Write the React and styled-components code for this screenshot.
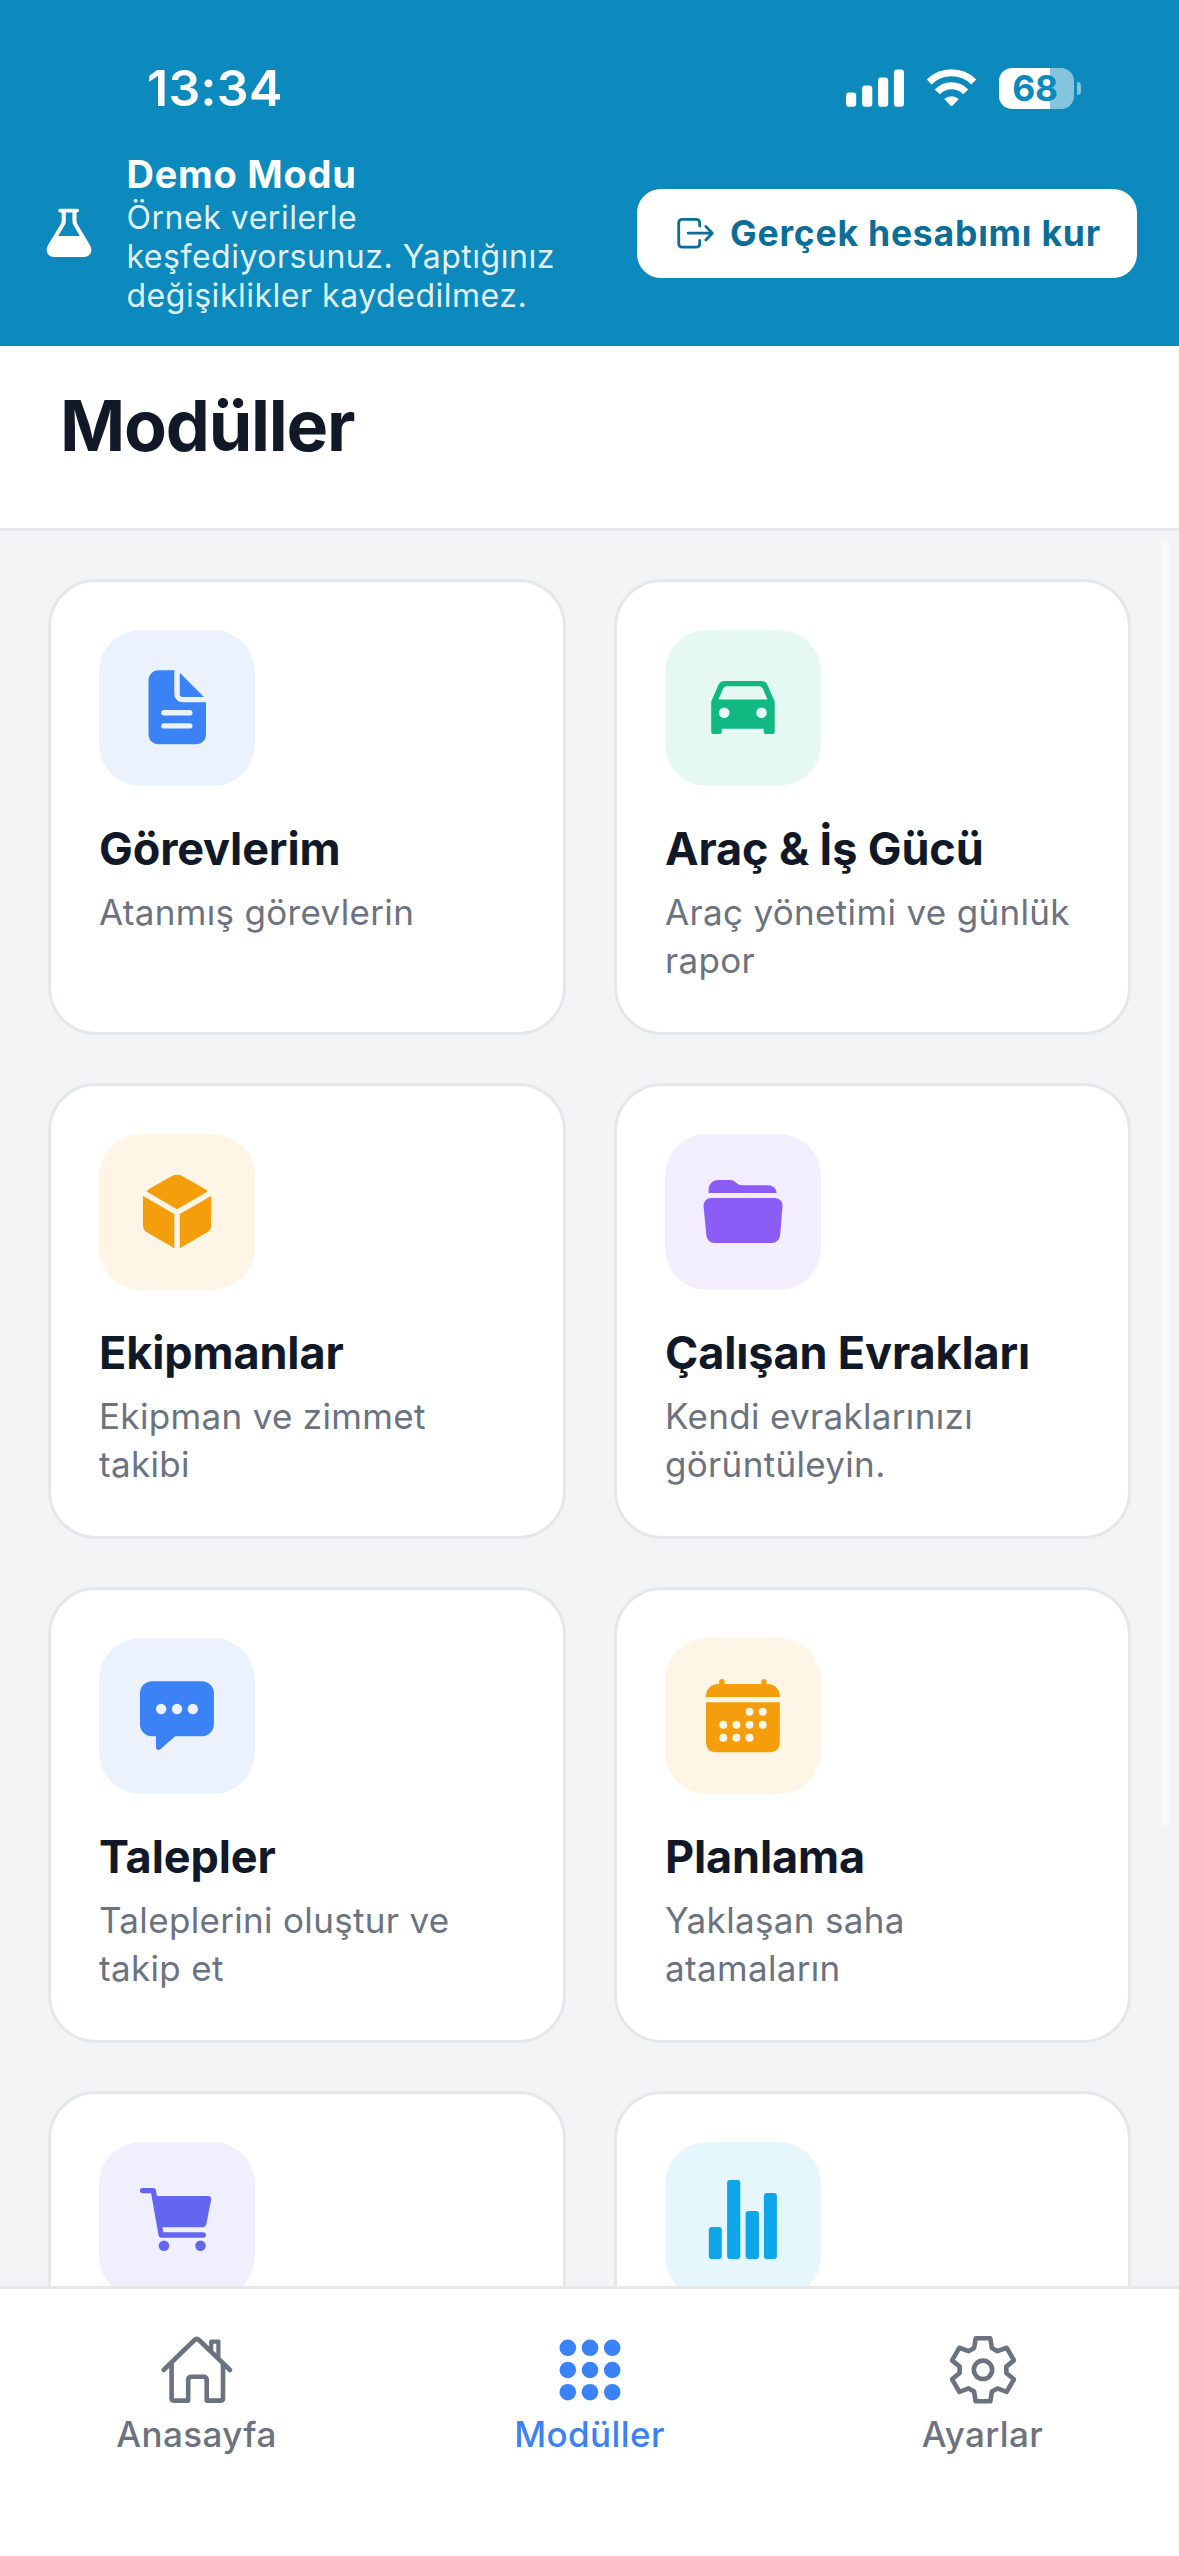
import React from "react";
import styled, { createGlobalStyle } from "styled-components";

const GlobalStyle = createGlobalStyle`
  *, *::before, *::after { box-sizing: border-box; }
  html, body { margin: 0; padding: 0; background: #ffffff; }
  body {
    font-family: Inter, "Liberation Sans", sans-serif;
    -webkit-font-smoothing: antialiased;
  }
`;

const Screen = styled.div`
  display: flex;
  flex-direction: column;
  width: 1179px;
  height: 2556px;
  overflow: hidden;
  background: #f3f4f6;
`;

const DemoHeader = styled.header`
  display: flex;
  flex-direction: column;
  height: 346px;
  flex: none;
  background: #0c8abd;
  color: #ffffff;
`;

const StatusBar = styled.div`
  display: flex;
  align-items: center;
  justify-content: space-between;
  height: 121px;
  padding: 55px 98px 0 147px;
`;

const Clock = styled.span`
  font-size: 50px;
  line-height: 60px;
  font-weight: 600;
  letter-spacing: 0.3px;
`;

const StatusIcons = styled.div`
  display: flex;
  align-items: center;
`;

const SignalSvg = styled.svg`
  display: block;
  width: 58px;
  height: 38px;
`;

const WifiSvg = styled.svg`
  display: block;
  width: 51px;
  height: 40px;
  margin-left: 22px;
`;

const Battery = styled.div`
  display: flex;
  align-items: center;
  margin-left: 22px;
`;

const BatteryBody = styled.div`
  display: flex;
  align-items: center;
  justify-content: center;
  width: 75px;
  height: 41px;
  border-radius: 13px;
  background: linear-gradient(to right, #ffffff 68%, #86c4de 68%);
  color: #0c8abd;
  font-size: 35.5px;
  line-height: 41px;
  font-weight: 700;
  letter-spacing: -0.4px;
  padding-right: 3px;
`;

const BatteryCap = styled.div`
  width: 4px;
  height: 13px;
  margin-left: 3px;
  border-radius: 0 4px 4px 0;
  background: #86c4de;
`;

const Banner = styled.div`
  display: flex;
  align-items: center;
  flex: 1;
  padding: 0 42px 0 39px;
`;

const FlaskSvg = styled.svg`
  display: block;
  width: 60px;
  height: 60px;
  flex: none;
  margin-bottom: 2px;
`;

const BannerText = styled.div`
  flex: 1;
  margin-left: 27.5px;
`;

const BannerTitle = styled.div`
  font-size: 38px;
  line-height: 44px;
  font-weight: 700;
  letter-spacing: 0.75px;
`;

const BannerBody = styled.div`
  margin-top: 2px;
  font-size: 32px;
  line-height: 39.3px;
  letter-spacing: 0.52px;
  white-space: pre-line;
  color: rgba(255, 255, 255, 0.9);
`;

const SetupButton = styled.button`
  display: flex;
  align-items: center;
  flex: none;
  width: 500px;
  height: 89px;
  padding: 0 0 0 38px;
  border: 0;
  border-radius: 24px;
  background: #ffffff;
  color: #0a6e99;
  font-family: inherit;
  font-size: 35.5px;
  line-height: 44px;
  font-weight: 700;
  white-space: nowrap;
  letter-spacing: 0.8px;
`;

const ExitSvg = styled.svg`
  display: block;
  width: 42px;
  height: 42px;
  margin-right: 13px;
  flex: none;
`;

const TitleBar = styled.div`
  flex: none;
  height: 185px;
  padding: 36px 60px 0;
  border-bottom: 3px solid #e5e7eb;
  background: #ffffff;
`;

const PageTitle = styled.h1`
  margin: 0;
  font-size: 70px;
  line-height: 88px;
  font-weight: 700;
  letter-spacing: -1.2px;
  color: #111827;
`;

const Content = styled.main`
  position: relative;
  flex: 1;
  min-height: 0;
  overflow: hidden;
  padding: 48px;
`;

const Scrollbar = styled.div`
  position: absolute;
  top: 9px;
  right: 9px;
  width: 9px;
  height: 1286px;
  border-radius: 5px;
  background: #f9f9fa;
`;

const ModuleGrid = styled.div`
  display: grid;
  grid-template-columns: 518px 517px;
  grid-auto-rows: 456px;
  gap: 48px;
`;

const Card = styled.article`
  padding: 48px;
  border: 3px solid #e5e7eb;
  border-radius: 48px;
  background: #ffffff;
`;

const IconTile = styled.div`
  display: flex;
  align-items: center;
  justify-content: center;
  width: 156px;
  height: 156px;
  border-radius: 42px;
  background: ${(p) => p.$bg};
  color: ${(p) => p.$fg};
`;

const ModuleSvg = styled.svg`
  display: block;
  width: 96px;
  height: 96px;
`;

const CardTitle = styled.h2`
  margin: 33px 0 0;
  font-size: 45px;
  line-height: 60px;
  font-weight: 700;
  letter-spacing: -0.12px;
  color: #111827;
  white-space: nowrap;
`;

const CardText = styled.p`
  margin: 9px 0 0;
  font-size: 35px;
  line-height: 48px;
  letter-spacing: 0.33px;
  color: #6b7280;
  white-space: pre-line;
`;

const TabBar = styled.nav`
  display: grid;
  grid-template-columns: repeat(3, 1fr);
  flex: none;
  height: 270px;
  border-top: 3px solid #e5e7eb;
  background: #ffffff;
`;

const Tab = styled.a`
  display: flex;
  flex-direction: column;
  align-items: center;
  padding-top: 39px;
  color: ${(p) => (p.$active ? "#3b82f6" : "#6b7280")};
`;

const TabSvg = styled.svg`
  display: block;
  width: 84px;
  height: 84px;
`;

const TabLabel = styled.span`
  font-size: 35px;
  line-height: 44px;
  font-weight: 500;
  letter-spacing: 0.4px;
`;

const glyphs = {
  document: (
    <>
      <path
        fillRule="evenodd"
        d="M29.5 10.3H45.3V33.5C45.3 38.5 49 42.3 54 42.3H77V74.3C77 80 72.7 84.3 67 84.3H29.5C23.9 84.3 19.5 80 19.5 74.3V20.3C19.5 14.7 23.9 10.3 29.5 10.3ZM34.9 50A2.7 2.7 0 0 0 34.9 55.4H60.8A2.7 2.7 0 0 0 60.8 50ZM34.9 63.2A2.7 2.7 0 0 0 34.9 68.6H60.8A2.7 2.7 0 0 0 60.8 63.2Z"
      />
      <path d="M50.8 12.7L74.9 37H53.5Q50.8 37 50.8 34.3Z" />
    </>
  ),
  car: (
    <path
      transform="translate(-0.8 0)"
      fillRule="evenodd"
      d="M17 41.5L24.2 25Q26 21 30.5 21H67Q71.5 21 73.3 25L80.5 41.5V72Q80.5 74 78.5 74H72.5Q69.5 74 69.5 71.5V68.7H27.6V71.5Q27.6 74 24.8 74H19Q17 74 17 72ZM24.2 39.4H73.3L68.6 28.6Q67.5 26.3 65 26.3H32.5Q30 26.3 29 28.6ZM30 47.4A5.3 5.3 0 1 0 30 58A5.3 5.3 0 1 0 30 47.4ZM67.3 47.4A5.3 5.3 0 1 0 67.3 58A5.3 5.3 0 1 0 67.3 47.4Z"
    />
  ),
  cube: (
    <>
      <path d="M17.7 27.4Q18.5 26 20.5 24.8L42.8 12.1Q48 9.3 53.2 12.1L75.6 24.8Q77.6 26 78.5 27.4L48 45.3Z" />
      <path d="M14 32L45.3 50V84.2L18.4 68.6Q14 66 14 61.5Z" />
      <path d="M82.1 32L50.8 50V84.2L77.7 68.6Q82.1 66 82.1 61.5Z" />
    </>
  ),
  folder: (
    <g transform="translate(-0.8 0)">
      <path d="M14.4 29V26.5C14.4 20.5 18 16 24 16H35.5C42 16 42 21.3 48.5 21.3H74C79 21.3 82.4 25 82.4 29Z" />
      <path d="M17 34H80.6C85.5 34 88.6 38 88.3 42.5L86 70.5C85.5 75.5 82 79 77.4 79H20.4C15.8 79 12.6 75.5 12.1 70.5L9.4 42.5C9 38 12.2 34 17 34Z" />
    </g>
  ),
  chat: (
    <path
      fillRule="evenodd"
      d="M23 13.2H72.9A12 12 0 0 1 84.9 25.2V56.2A12 12 0 0 1 72.9 68.2H46.2L31.4 81.2C29.5 82.8 27 82 27 79.3V68.2H23A12 12 0 0 1 11 56.2V25.2A12 12 0 0 1 23 13.2ZM32.2 35.8A5.2 5.2 0 1 0 32.2 46.2A5.2 5.2 0 1 0 32.2 35.8ZM48 35.8A5.2 5.2 0 1 0 48 46.2A5.2 5.2 0 1 0 48 35.8ZM63.8 35.8A5.2 5.2 0 1 0 63.8 46.2A5.2 5.2 0 1 0 63.8 35.8Z"
    />
  ),
  cart: (
    <>
      <path
        d="M13.6 18.6H24.3L32.2 63H74.3"
        fill="none"
        stroke="currentColor"
        strokeWidth="5.3"
        strokeLinecap="round"
        strokeLinejoin="round"
      />
      <path d="M26 24H79Q82.7 24 82.1 27.6L77.5 51.6Q76.8 55.2 73.5 55.2H31Z" />
      <circle cx="35" cy="73.7" r="5.3" />
      <circle cx="71.5" cy="73.7" r="5.3" />
    </>
  ),
  stats: (
    <g transform="translate(-0.5 0)">
      <rect x="14.3" y="55" width="13" height="32" rx="3" />
      <rect x="32.6" y="8" width="13.2" height="79" rx="3" />
      <rect x="51.1" y="39" width="13.4" height="48" rx="3" />
      <rect x="69.4" y="21" width="13" height="66" rx="3" />
    </g>
  ),
};

const calendarDots = [
  [55, 43.7], [68.2, 43.7],
  [28.8, 56.7], [41.9, 56.7], [55, 56.7], [68.2, 56.7],
  [28.8, 69.7], [41.9, 69.7], [55, 69.7],
];

function CalendarGlyph({ hole }) {
  return (
    <g transform="translate(-0.5 0)">
      <path d="M11.5 29V28C11.5 21 16.5 16 23.5 16H24.7V13.7A2.7 2.7 0 0 1 30.1 13.7V16H66.7V13.7A2.7 2.7 0 0 1 72.1 13.7V16H73.3C80.3 16 85.3 21 85.3 28V29Z" />
      <path d="M11.5 34.3H85.3V73.8Q85.3 84.3 74.8 84.3H22Q11.5 84.3 11.5 73.8Z" />
      {calendarDots.map(([cx, cy]) => (
        <circle key={`${cx}-${cy}`} cx={cx} cy={cy} r="4" fill={hole} />
      ))}
    </g>
  );
}

const gearPoints = Array.from({ length: 6 }, (_, tooth) => {
  const a = (tooth * Math.PI) / 3;
  return [[-8.9, -21.8], [-7.3, -31.5], [7.3, -31.5], [8.9, -21.8]].map(([x, y]) => [
    42 + x * Math.cos(a) - y * Math.sin(a),
    41.8 + x * Math.sin(a) + y * Math.cos(a),
  ]);
});

const gearPath =
  gearPoints
    .map((p, i) => {
      const next = gearPoints[(i + 1) % 6];
      const f = ([x, y]) => `${x.toFixed(2)} ${y.toFixed(2)}`;
      const vx = (p[3][0] + next[0][0]) / 2;
      const vy = (p[3][1] + next[0][1]) / 2;
      return `${i === 0 ? "M" : "L"}${f(p[0])}L${f(p[1])}L${f(p[2])}L${f(p[3])}Q${vx.toFixed(2)} ${vy.toFixed(2)} ${f(next[0])}`;
    })
    .join("") + "Z";

const tabGlyphs = {
  home: (
    <g fill="none" stroke="currentColor" strokeWidth="4.6" strokeLinecap="round" strokeLinejoin="round">
      <path d="M8.6 42L39.6 12Q41.8 10 44 12L75 42" />
      <path d="M16.6 36V70.6Q16.6 72.6 18.6 72.6H33.2V52Q33.2 48.7 36.5 48.7H48.4Q51.7 48.7 51.7 52V72.6H66Q68 72.6 68 70.6V36" />
      <path d="M56.2 22V13.6H63.4V29" strokeWidth="4.2" />
    </g>
  ),
  keypad: (
    <>
      {[19.8, 42, 64.2].map((cy) =>
        [19.8, 42, 64.2].map((cx) => <circle key={`${cx}-${cy}`} cx={cx} cy={cy} r="8.3" />)
      )}
    </>
  ),
  gear: (
    <g fill="none" stroke="currentColor" strokeWidth="4.6" strokeLinejoin="round">
      <path d={gearPath} />
      <circle cx="42" cy="41.8" r="9.2" />
    </g>
  ),
};

const modules = [
  { title: "Görevlerim", text: "Atanmış görevlerin", icon: "document", fg: "#3b82f6", bg: "#ebf2fe" },
  { title: "Araç & İş Gücü", text: "Araç yönetimi ve günlük\nrapor", icon: "car", fg: "#10b981", bg: "#e5f8f1" },
  { title: "Ekipmanlar", text: "Ekipman ve zimmet\ntakibi", icon: "cube", fg: "#f59e0b", bg: "#fff5e6" },
  { title: "Çalışan Evrakları", text: "Kendi evraklarınızı\ngörüntüleyin.", icon: "folder", fg: "#8b5cf6", bg: "#f2eefe" },
  { title: "Talepler", text: "Taleplerini oluştur ve\ntakip et", icon: "chat", fg: "#3b82f6", bg: "#ebf2fe" },
  { title: "Planlama", text: "Yaklaşan saha\natamaların", icon: "calendar", fg: "#f59e0b", bg: "#fff5e6" },
  { icon: "cart", fg: "#6366f1", bg: "#f0effe" },
  { icon: "stats", fg: "#0ea5e9", bg: "#e5f6fd" },
];

const tabs = [
  { label: "Anasayfa", icon: "home" },
  { label: "Modüller", icon: "keypad", active: true },
  { label: "Ayarlar", icon: "gear" },
];

function ModuleCard({ title, text, icon, fg, bg }) {
  return (
    <Card>
      <IconTile $bg={bg} $fg={fg}>
        <ModuleSvg viewBox="0 0 96 96" fill="currentColor">
          {icon === "calendar" ? <CalendarGlyph hole={bg} /> : glyphs[icon]}
        </ModuleSvg>
      </IconTile>
      {title && <CardTitle>{title}</CardTitle>}
      {text && <CardText>{text}</CardText>}
    </Card>
  );
}

export default function App() {
  return (
    <Screen>
      <GlobalStyle />
      <DemoHeader>
        <StatusBar>
          <Clock>13:34</Clock>
          <StatusIcons>
            <SignalSvg viewBox="0 0 58 38" fill="#ffffff">
              <rect x="0" y="23.5" width="10.2" height="14.2" rx="3" />
              <rect x="16.1" y="16.5" width="10.2" height="21.2" rx="3" />
              <rect x="32" y="8.5" width="10.2" height="29.2" rx="3" />
              <rect x="47.9" y="0.5" width="10.1" height="37.2" rx="3" />
            </SignalSvg>
            <WifiSvg viewBox="0 0 51 40">
              <g fill="none" stroke="#ffffff" strokeWidth="7">
                <path d="M3.2 14A31.7 31.7 0 0 1 47.8 14" />
                <path d="M11.3 23.9A19.4 19.4 0 0 1 39.7 23.9" />
              </g>
              <path d="M18.2 30.9A11 11 0 0 1 32.8 30.9L26.3 37.8Q25.5 38.6 24.7 37.8Z" fill="#ffffff" />
            </WifiSvg>
            <Battery>
              <BatteryBody>68</BatteryBody>
              <BatteryCap />
            </Battery>
          </StatusIcons>
        </StatusBar>
        <Banner>
          <FlaskSvg viewBox="0 0 60 60">
            <path
              fill="#ffffff"
              fillRule="evenodd"
              d="M21 5.8H38.3A1.8 1.8 0 0 1 38.3 9.4H37.5V17.5Q37.5 19.5 38.5 21.2L50.6 41.5C54.6 48 51.2 54 44.6 54H15.4C8.8 54 5.4 48 9.4 41.5L21.6 21.2Q22.7 19.5 22.7 17.5V9.4H21A1.8 1.8 0 0 1 21 5.8ZM26.8 9.4V18.5Q26.8 20.3 25.9 21.8L19.2 33H40.8L34.3 21.8Q33.4 20.3 33.4 18.5V9.4Z"
            />
          </FlaskSvg>
          <BannerText>
            <BannerTitle>Demo Modu</BannerTitle>
            <BannerBody>{"Örnek verilerle\nkeşfediyorsunuz. Yaptığınız\ndeğişiklikler kaydedilmez."}</BannerBody>
          </BannerText>
          <SetupButton>
            <ExitSvg
              viewBox="0 0 42 42"
              fill="none"
              stroke="currentColor"
              strokeWidth="2.8"
              strokeLinecap="round"
              strokeLinejoin="round"
            >
              <path d="M24.7 13V10.3Q24.7 6.3 20.7 6.3H7.7Q3.7 6.3 3.7 10.3V30.2Q3.7 34.2 7.7 34.2H20.7Q24.7 34.2 24.7 30.2V27.5" />
              <path d="M13.2 20.2H37M30.8 13.4L37.3 20.2L30.8 27" />
            </ExitSvg>
            Gerçek hesabımı kur
          </SetupButton>
        </Banner>
      </DemoHeader>
      <TitleBar>
        <PageTitle>Modüller</PageTitle>
      </TitleBar>
      <Content>
        <ModuleGrid>
          {modules.map((m) => (
            <ModuleCard key={m.icon} {...m} />
          ))}
        </ModuleGrid>
        <Scrollbar />
      </Content>
      <TabBar>
        {tabs.map((t) => (
          <Tab key={t.label} $active={t.active}>
            <TabSvg viewBox="0 0 84 84" fill="currentColor">
              {tabGlyphs[t.icon]}
            </TabSvg>
            <TabLabel>{t.label}</TabLabel>
          </Tab>
        ))}
      </TabBar>
    </Screen>
  );
}
